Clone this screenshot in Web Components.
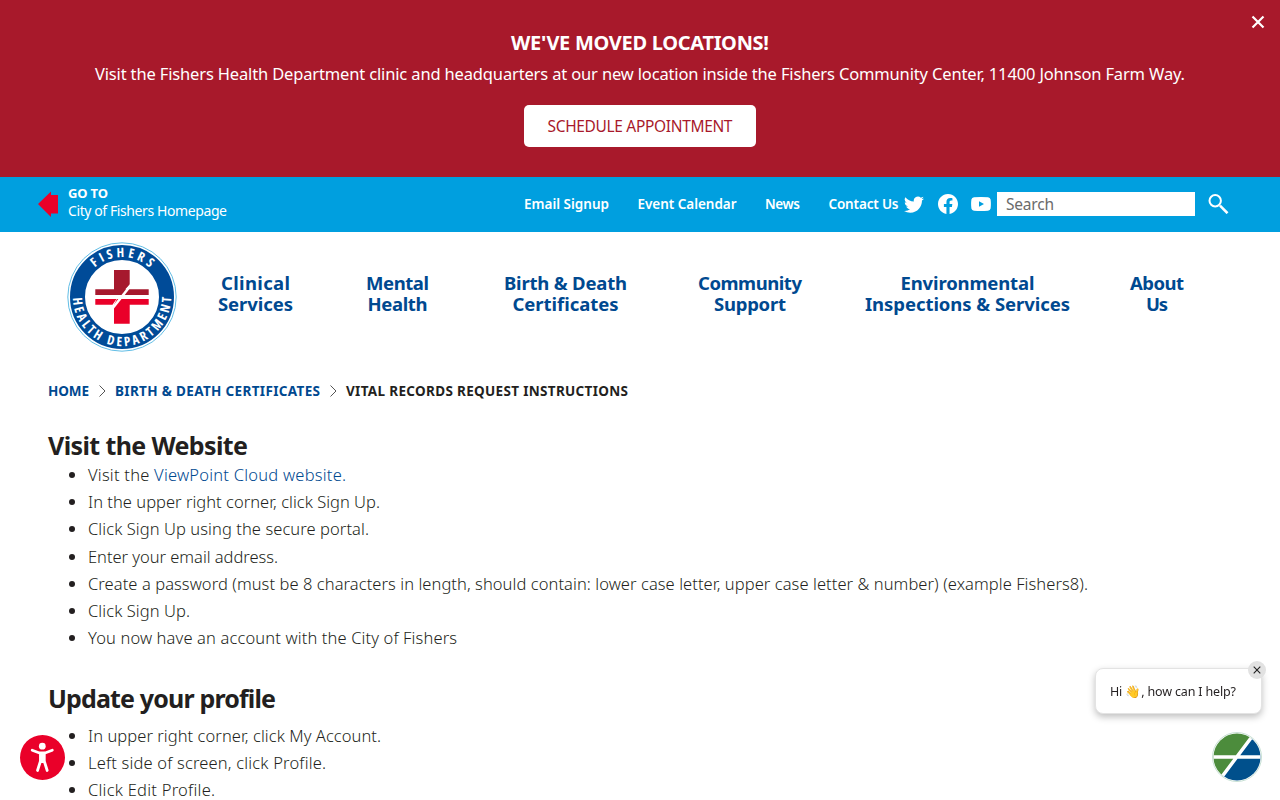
<!DOCTYPE html>
<html lang="en">
<head>
<meta charset="utf-8">
<title>Vital Records Request Instructions</title>
<style>
    :root {
        --navy: #004990;
        --sky: #009fdf;
        --brick: #a8192b;
        --red: #ea0029;
        --ink: #231f20;
    }
    html, body { margin: 0; height: 800px; overflow: hidden; }
    body {
        background: #fff;
        color: var(--ink);
        font-family: "Noto Sans", "Open Sans", sans-serif;
        font-size: 16.5px;
    }
</style>
</head>
<body>
<site-banner></site-banner>
<top-bar></top-bar>
<site-header></site-header>
<page-content></page-content>
<access-button></access-button>
<chat-widget></chat-widget>

<script>
/* Base class: puts the element's template in an open shadow root */
class BaseElement extends HTMLElement {
    connectedCallback() {
        if (this.shadowRoot) return;
        this.attachShadow({ mode: 'open' });
        this.shadowRoot.innerHTML = this.template();
    }
}

/* Tracks its text so that the line takes up the given measure */
class FitText extends BaseElement {
    template() {
        return `<style>:host { display: inline-block; white-space: nowrap; }</style><slot></slot>`;
    }

    connectedCallback() {
        super.connectedCallback();
        const target = Number(this.getAttribute('w'));
        const count = [...this.textContent].length;
        const natural = this.getBoundingClientRect().width;
        const tracking = (target - natural) / (count - 1);
        this.style.letterSpacing = tracking.toFixed(3) + 'px';
        this.style.marginRight = (-tracking).toFixed(3) + 'px';
    }
}
customElements.define('fit-text', FitText);

class SiteBanner extends BaseElement {
    template() {
        return `
        <style>
            :host {
                display: flex; flex-direction: column; align-items: center;
                position: relative; box-sizing: border-box; height: 177px; padding-top: 29px;
                background: var(--brick); color: #fff;
            }
            h2 { margin: 0; font-size: 20px; line-height: 28px; font-weight: 700; }
            p { margin: 3px 0 0; font-size: 16.5px; line-height: 28px; }
            a {
                display: flex; align-items: center; justify-content: center;
                box-sizing: border-box; width: 232px; height: 42px; margin-top: 17px;
                border-radius: 5px; background: #fff; color: var(--brick); font-size: 15.5px;
            }
            svg { position: absolute; right: 15px; top: 15px; }
        </style>
        <h2><fit-text w="258">WE'VE MOVED LOCATIONS!</fit-text></h2>
        <p><fit-text w="1090">Visit the Fishers Health Department clinic and headquarters at our new location inside the Fishers Community Center, 11400 Johnson Farm Way.</fit-text></p>
        <a><fit-text w="185">SCHEDULE APPOINTMENT</fit-text></a>
        <svg width="14" height="14" viewBox="0 0 14 14" stroke="#fff" stroke-width="2.2"><path d="M1.5 1.5 12.5 12.5M12.5 1.5 1.5 12.5"/></svg>
        `;
    }
}
customElements.define('site-banner', SiteBanner);

class TopBar extends BaseElement {
    template() {
        return `
        <style>
            :host {
                display: flex; align-items: center; box-sizing: border-box;
                height: 55px; padding: 0 51px 2px 38px;
                background: var(--sky); color: #fff; font-size: 14px;
            }
            svg { display: block; flex: none; }
            .goto { margin: -4px auto 0 10px; line-height: 18px; }
            .goto b { display: block; font-size: 13px; }
            .links { display: flex; gap: 28.500px; font-weight: 600; font-size: 13.5px; line-height: 20px; }
            .social { display: flex; align-items: center; margin: 0 6px 0 5.500px; }
            .social svg + svg { margin-left: 13px; }
            .field {
                box-sizing: border-box; width: 198px; height: 24px; padding-left: 9px;
                background: #fff; color: #6b6b6b; font-size: 15.5px; line-height: 24px; margin-right: 13px;
            }
        </style>
        <svg width="20" height="26" viewBox="0 0 20 26"><path fill="var(--red)" d="M0 13 13 .5V4h7v18.500h-7V26z"/></svg>
        <div class="goto">
            <b><fit-text w="40">GO TO</fit-text></b>
            <fit-text w="159">City of Fishers Homepage</fit-text>
        </div>
        <nav class="links">
            <fit-text w="85">Email Signup</fit-text>
            <fit-text w="99">Event Calendar</fit-text>
            <fit-text w="35">News</fit-text>
            <fit-text w="70">Contact Us</fit-text>
        </nav>
        <div class="social">
            <svg style="margin-right: 1px" width="20" height="20" viewBox="0 0 16 16" fill="#fff"><path d="M5.026 15c6.038 0 9.341-5.003 9.341-9.334 0-.14 0-.282-.006-.422A6.685 6.685 0 0 0 16 3.542a6.658 6.658 0 0 1-1.889.518 3.301 3.301 0 0 0 1.447-1.817 6.533 6.533 0 0 1-2.087.793A3.286 3.286 0 0 0 7.875 6.03a9.325 9.325 0 0 1-6.767-3.429 3.289 3.289 0 0 0 1.018 4.382A3.323 3.323 0 0 1 .64 6.575v.045a3.288 3.288 0 0 0 2.632 3.218 3.203 3.203 0 0 1-.865.115 3.23 3.23 0 0 1-.614-.057 3.283 3.283 0 0 0 3.067 2.277A6.588 6.588 0 0 1 .78 13.58a6.32 6.32 0 0 1-.78-.045A9.344 9.344 0 0 0 5.026 15z"/></svg>
            <svg width="20" height="20" viewBox="0 0 16 16" fill="#fff"><path d="M16 8.049c0-4.446-3.582-8.05-8-8.05C3.58 0-.002 3.603-.002 8.05c0 4.017 2.926 7.347 6.75 7.951v-5.625h-2.03V8.05H6.75V6.275c0-2.017 1.195-3.131 3.022-3.131.876 0 1.791.157 1.791.157v1.980h-1.009c-.993 0-1.303.621-1.303 1.258v1.510h2.218l-.354 2.326H9.250V16c3.824-.604 6.750-3.934 6.750-7.951z"/></svg>
            <svg width="20" height="20" viewBox="0 0 20 20" fill="#fff"><path fill-rule="evenodd" d="M3 3.300Q10 2.700 17 3.300 19.200 3.500 19.600 5.500 20.200 10 19.600 14.500 19.200 16.500 17 16.700 10 17.300 3 16.700.8 16.500.4 14.500-.2 10 .4 5.500.8 3.500 3 3.300zM8 7.200v5.600L13 10z"/></svg>
        </div>
        <div class="field"><fit-text w="48">Search</fit-text></div>
        <svg width="21" height="21" viewBox="0 -.5 21 21" fill="none" stroke="#fff"><circle cx="7.200" cy="7.200" r="5.700" stroke-width="2"/><path d="M12 12.200 19.500 19.700" stroke-width="2.600"/></svg>
        `;
    }
}
customElements.define('top-bar', TopBar);

class HealthSeal extends BaseElement {
    template() {
        return `
        <style>
            :host { display: block; width: 110px; height: 110px; }
            svg { display: block; }
            text { font-family: "Open Sans"; font-stretch: 75%; font-size: 13px; font-weight: 700; fill: #fff; }
        </style>
        <svg width="110" height="110" viewBox="-55 -55 110 110">
            <defs>
                <path id="top" d="M-40 0A40 40 0 0 1 40 0"/>
                <path id="bottom" d="M-49.200 0A49.200 49.200 0 0 0 49.200 0"/>
            </defs>
            <circle r="54.200" fill="#fff" stroke="#4fb5e2" stroke-width=".9"/>
            <circle r="44.500" fill="none" stroke="#004b98" stroke-width="15"/>
            <text textLength="60"><textPath href="#top" startOffset="33" textLength="60">FISHERS</textPath></text>
            <text textLength="153"><textPath href="#bottom" startOffset="1" textLength="153">HEALTH DEPARTMENT</textPath></text>
            <path fill="#a6192e" d="M-8-27H7.700V-12.500L3.300-7.700H26.700V-2H-1.200L-1.500-2H-26.700V-7.700H-8z"/>
            <path fill="#ea0029" d="M-26.700 2H-5.500L-9.500 7.700H-26.700zM3.500 2H26.700V7.700H7.700V26.700H-8V7.700L-5 2z"/>
            <path stroke="#fff" stroke-width="2.600" d="M-10 12 9-12"/>
            <path stroke="#fff" stroke-width="4" d="M-27 0H27"/>
        </svg>
        `;
    }
}
customElements.define('health-seal', HealthSeal);

/* Two-line entry of the main menu */
class NavItem extends BaseElement {
    template() {
        return `
        <style>
            :host {
                display: flex; flex-direction: column; align-items: center; flex: none;
                color: var(--navy); font-size: 18.5px; line-height: 21px; font-weight: 700;
            }
        </style>
        <slot></slot>
        `;
    }
}
customElements.define('nav-item', NavItem);

class SiteHeader extends BaseElement {
    template() {
        return `
        <style>
            :host { display: flex; align-items: flex-start; box-sizing: border-box; height: 128px; padding: 10px 0 0 67px; }
            nav { display: flex; margin: 30px 0 0 41px; }
            nav-item + nav-item { margin-left: var(--gap); }
        </style>
        <health-seal></health-seal>
        <nav>
            <nav-item><fit-text w="69">Clinical</fit-text><fit-text w="75">Services</fit-text></nav-item>
            <nav-item style="--gap: 73px"><fit-text w="63">Mental</fit-text><fit-text w="60">Health</fit-text></nav-item>
            <nav-item style="--gap: 75px"><fit-text w="123">Birth &amp; Death</fit-text><fit-text w="106">Certificates</fit-text></nav-item>
            <nav-item style="--gap: 71px"><fit-text w="104">Community</fit-text><fit-text w="72">Support</fit-text></nav-item>
            <nav-item style="--gap: 63px"><fit-text w="134">Environmental</fit-text><fit-text w="205">Inspections &amp; Services</fit-text></nav-item>
            <nav-item style="--gap: 60px"><fit-text w="54">About</fit-text><fit-text w="22">Us</fit-text></nav-item>
        </nav>
        `;
    }
}
customElements.define('site-header', SiteHeader);

class BreadCrumbs extends BaseElement {
    template() {
        return `
        <style>
            :host { display: flex; align-items: center; height: 20px; font-size: 13.5px; font-weight: 700; }
            a { color: var(--navy); }
            svg { margin: 0 9px 0 10px; }
        </style>
        <a><fit-text w="41">HOME</fit-text></a>
        <svg width="7" height="12" viewBox="0 0 7 12" fill="none" stroke="#555"><path d="M.5.5 6 6 .5 11.500"/></svg>
        <a><fit-text w="205">BIRTH &amp; DEATH CERTIFICATES</fit-text></a>
        <svg width="7" height="12" viewBox="0 0 7 12" fill="none" stroke="#555"><path d="M.5.5 6 6 .5 11.500"/></svg>
        <fit-text w="282">VITAL RECORDS REQUEST INSTRUCTIONS</fit-text>
        `;
    }
}
customElements.define('bread-crumbs', BreadCrumbs);

class PageContent extends BaseElement {
    template() {
        return `
        <style>
            :host { display: block; padding: 21px 48px 0; }
            h2 { margin: 28px 0 0; font-size: 25px; line-height: 32px; font-weight: 700; }
            ul { margin: 0; padding-left: 40px; font-weight: 300; line-height: 27.200px; }
            ul + h2 { margin-top: 31px; }
            li { height: 27.200px; }
            ul.loose { margin-top: 7.800px; }
            a { color: var(--navy); }
        </style>
        <bread-crumbs></bread-crumbs>
        <h2><fit-text w="200">Visit the Website</fit-text></h2>
        <ul>
            <li><fit-text w="258">Visit the <a>ViewPoint Cloud website.</a></fit-text></li>
            <li><fit-text w="292">In the upper right corner, click Sign Up.</fit-text></li>
            <li><fit-text w="281">Click Sign Up using the secure portal.</fit-text></li>
            <li><fit-text w="190">Enter your email address.</fit-text></li>
            <li><fit-text w="1000">Create a password (must be 8 characters in length, should contain: lower case letter, upper case letter &amp; number) (example Fishers8).</fit-text></li>
            <li><fit-text w="102">Click Sign Up.</fit-text></li>
            <li><fit-text w="369">You now have an account with the City of Fishers</fit-text></li>
        </ul>
        <h2><fit-text w="228">Update your profile</fit-text></h2>
        <ul class="loose">
            <li><fit-text w="293">In upper right corner, click My Account.</fit-text></li>
            <li><fit-text w="238">Left side of screen, click Profile.</fit-text></li>
            <li><fit-text w="127">Click Edit Profile.</fit-text></li>
        </ul>
        `;
    }
}
customElements.define('page-content', PageContent);

class AccessButton extends BaseElement {
    template() {
        return `
        <style>
            :host { display: block; position: fixed; left: 20px; top: 735px; }
            svg { display: block; }
        </style>
        <svg width="45" height="45" viewBox="0 0 45 45">
            <circle cx="22.500" cy="22.500" r="22.500" fill="var(--red)"/>
            <circle cx="22.300" cy="11.200" r="3.400" fill="#fff"/>
            <path d="M12.200 15.300 19.500 18H25L32.300 15.300M17.500 35.500 20.500 26V18.500H24.200V26L27.200 35.500" fill="none" stroke="#fff" stroke-width="2.800" stroke-linecap="round" stroke-linejoin="round"/>
            <path d="M19.500 17.500H25.200V25.500L24 28H20.600L19.500 25.500z" fill="#fff"/>
        </svg>
        `;
    }
}
customElements.define('access-button', AccessButton);

class ChatWidget extends BaseElement {
    template() {
        return `
        <style>
            :host { display: block; position: fixed; right: 18px; top: 668px; width: 167px; }
            .bubble {
                box-sizing: border-box; width: 167px; height: 46px; padding-left: 14px;
                border: 1px solid #e3e3e3; border-radius: 8px; background: #fff;
                box-shadow: 0 3px 7px rgba(0, 0, 0, .25);
                font-size: 12.5px; line-height: 45px;
            }
            .close { position: absolute; right: -4px; top: -7px; display: block; }
            .logo { display: block; margin: 18px 0 0 117px; }
        </style>
        <div class="bubble"><fit-text w="126">Hi 👋, how can I help?</fit-text></div>
        <svg class="close" width="18" height="18" viewBox="0 0 18 18"><circle cx="9" cy="9" r="9" fill="#e2e2e2"/><path d="M5.700 5.700 12.300 12.300M12.300 5.700 5.700 12.300" stroke="#222" stroke-width="1.100"/></svg>
        <svg class="logo" width="50" height="50" viewBox="-25 -25 50 50">
            <defs><clipPath id="disc"><circle r="23.500"/></clipPath></defs>
            <circle r="24.500" fill="#fff" stroke="#b9d8c9" stroke-width=".8"/>
            <g clip-path="url(#disc)">
                <path fill="#4c8c3c" d="M-25-25H19L-19 25H-25z"/>
                <path fill="#00508c" d="M25-25H19L-19 25H25z"/>
                <path d="M-25 0H25M17-23-16 21" stroke="#fff" stroke-width="3.500"/>
            </g>
        </svg>
        `;
    }
}
customElements.define('chat-widget', ChatWidget);
</script>
</body>
</html>
